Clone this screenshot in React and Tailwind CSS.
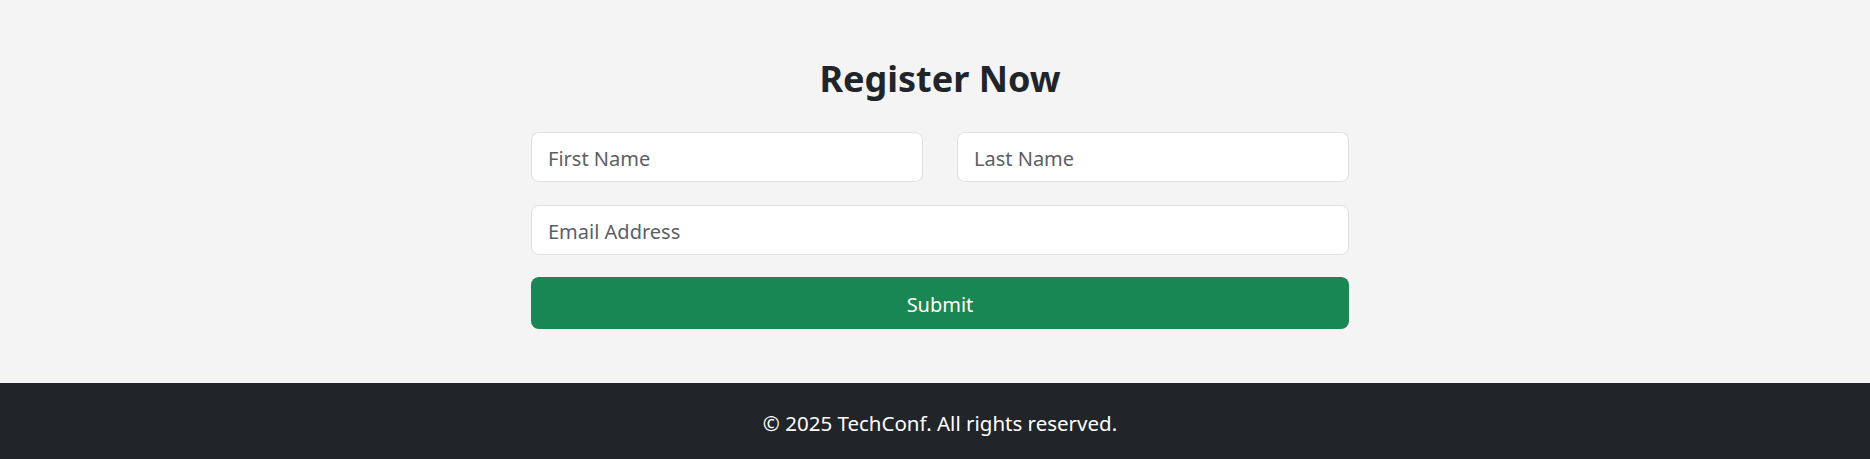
import { useState } from "react";

const fieldClass =
  "w-full h-[50px] px-4 pt-[2px] rounded-lg border border-[#dee2e6] bg-white text-[20px] text-[#212529] placeholder:text-[#5c6065] outline-none focus:border-[#86b7fe]";

const App = () => {
  const [form, setForm] = useState({ firstName: "", lastName: "", email: "" });

  const update = (key) => (e) => setForm((prev) => ({ ...prev, [key]: e.target.value }));

  return (
    <div className="min-h-screen flex flex-col bg-[#f4f4f4] font-['Noto_Sans',sans-serif]">
      {/* Registration */}
      <section className="pt-[56px] pb-[54px] pl-[10px]">
        <div className="w-[818px] mx-auto">
          <h2 className="text-center text-[36px] leading-[48px] font-bold text-[#212529] mb-[28px] -translate-y-[1px]">
            Register Now
          </h2>
          <form onSubmit={(e) => e.preventDefault()} className="flex flex-col">
            <div className="grid grid-cols-2 gap-x-[34px] mb-[23px]">
              <input
                type="text"
                placeholder="First Name"
                value={form.firstName}
                onChange={update("firstName")}
                className={fieldClass}
              />
              <input
                type="text"
                placeholder="Last Name"
                value={form.lastName}
                onChange={update("lastName")}
                className={fieldClass}
              />
            </div>
            <input
              type="email"
              placeholder="Email Address"
              value={form.email}
              onChange={update("email")}
              className={fieldClass + " mb-[22px]"}
            />
            <button
              type="submit"
              className="w-full h-[52px] pt-[4px] rounded-lg bg-[#198754] text-white text-[20px] hover:bg-[#157347]"
            >
              Submit
            </button>
          </form>
        </div>
      </section>

      <footer className="bg-[#212529] text-white text-center py-[23px] pl-[10px]">
        <p className="text-[20.5px] leading-[30px] pt-[2px]">© 2025 TechConf. All rights reserved.</p>
      </footer>
    </div>
  );
};

export default App;
